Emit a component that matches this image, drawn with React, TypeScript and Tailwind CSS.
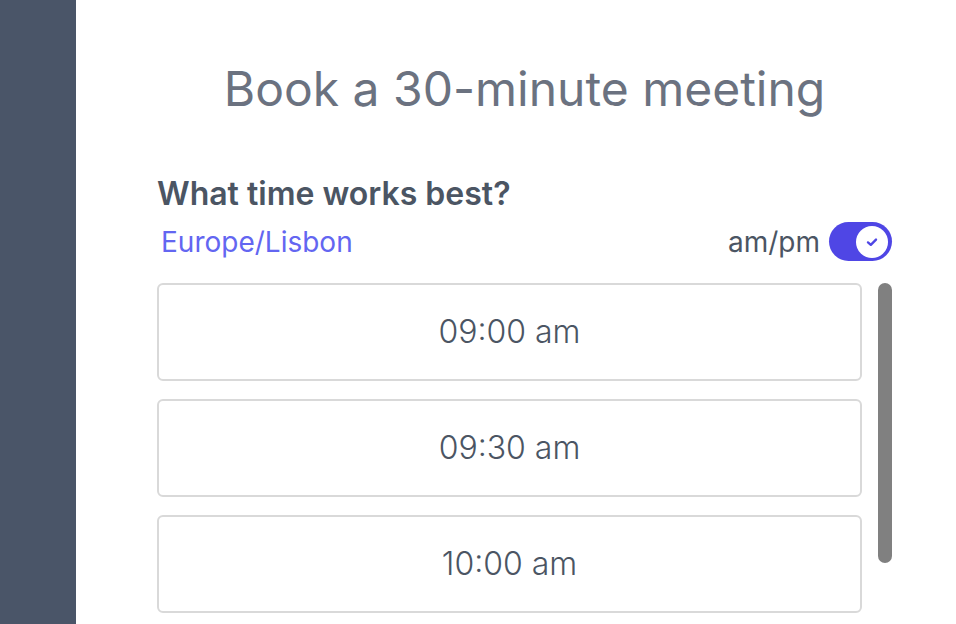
import React from "react";

const slots = ["09:00 am", "09:30 am", "10:00 am"];

export default function App() {
  return (
    <div className="flex h-[624px] w-[956px] overflow-hidden bg-white" style={{ fontFamily: "Inter, 'Noto Sans', sans-serif" }}>
      <div className="w-[76px] shrink-0 bg-[#4a5568]" />
      <div className="flex flex-1 flex-col pl-[81px] pr-[64px] pt-[57px]">
        <h1 className="text-center text-[48px] leading-[64px] font-normal text-[#6b7280]">Book a 30-minute meeting</h1>
        <h2 className="mt-[53px] text-[32px] leading-[40px] font-semibold text-[#4b5563]">What time works best?</h2>
        <div className="mt-[9px] flex items-center justify-between">
          <span className="pl-[4px] text-[28px] leading-[34px] text-[#6366f1]">Europe/Lisbon</span>
          <div className="flex items-center gap-[9px]">
            <span className="text-[28px] leading-[34px] text-[#4b5563]">am/pm</span>
            <div className="-mt-[1px] flex h-[39px] w-[63px] items-center justify-end rounded-full bg-[#4f46e5] pr-[4px]">
              <div className="flex h-[32px] w-[32px] items-center justify-center rounded-full bg-white">
                <svg width="14" height="14" viewBox="0 0 14 14" fill="none">
                  <path d="M3 7.4 L5.8 9.8 L11 4.6" stroke="#4f46e5" strokeWidth="2.4" strokeLinecap="round" strokeLinejoin="round" />
                </svg>
              </div>
            </div>
          </div>
        </div>
        <div className="mt-[22px] flex gap-[16px]">
          <div className="flex flex-1 flex-col gap-[18px]">
            {slots.map((s) => (
              <div key={s} className="flex h-[98px] items-center justify-center rounded-[6px] border-2 border-[#d9d9d9] text-[32px] font-light text-[#4b5563]">
                {s}
              </div>
            ))}
          </div>
          <div className="w-[14px] shrink-0">
            <div className="h-[280px] w-[14px] rounded-full bg-[#808080]" />
          </div>
        </div>
      </div>
    </div>
  );
}
